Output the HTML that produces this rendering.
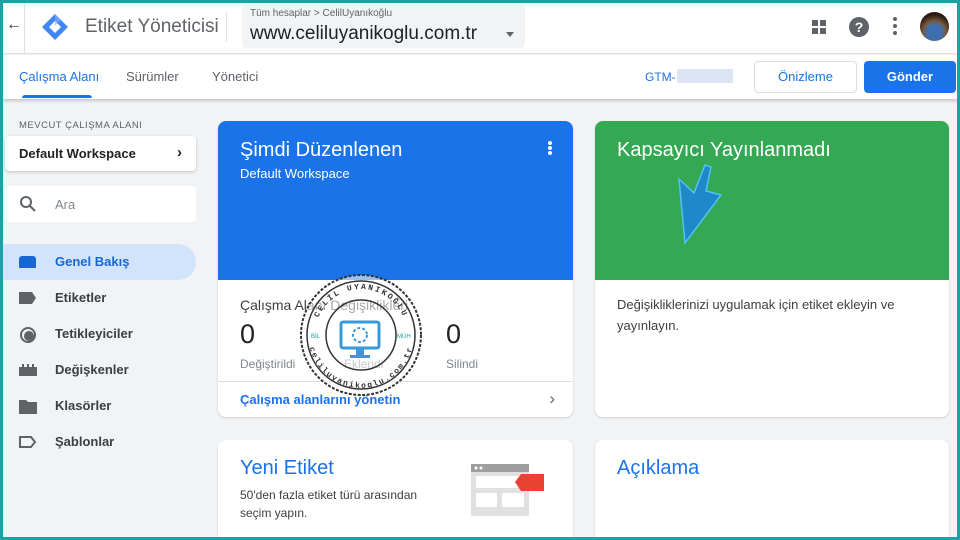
<!DOCTYPE html>
<html><head><meta charset="utf-8"><style>
*{margin:0;padding:0;box-sizing:border-box}
body{width:960px;height:540px;overflow:hidden;font-family:"Liberation Sans",sans-serif;background:#f1f3f4;position:relative}
.abs{position:absolute}
.frame{position:absolute;inset:0;border:3px solid #1ba3a3;pointer-events:none;z-index:50}
.hdr{left:0;top:0;width:960px;height:54px;background:#fff;border-bottom:1px solid #e0e0e0}
.tabs{left:0;top:55px;width:960px;height:44px;background:#fff;box-shadow:0 2px 3px rgba(0,0,0,.18)}
.card{position:absolute;background:#fff;border-radius:8px;box-shadow:0 1px 2px rgba(0,0,0,.15);overflow:hidden}
.nav{position:absolute;left:0;width:196px;height:36px;font-size:13px;font-weight:bold;color:#3c4043;line-height:36px;padding-left:55px}
.ic{position:absolute;left:19px;top:12px}
</style></head><body>
<div class="abs hdr">
 <div class="abs" style="left:6px;top:16px;font-size:16px;color:#333">←</div>
 <div class="abs" style="left:24px;top:0;width:1px;height:54px;background:#e0e0e0"></div>
 <svg class="abs" style="left:40px;top:13px" width="30" height="28" viewBox="0 0 30 28"><path d="M15 1 L28 14 L15 27 L2 14Z" fill="#4285f4"/><path d="M15 8 L21 14 L15 20 L9 14Z" fill="#fff"/><path d="M15 1 L21 7 L15 13" fill="#8ab4f8" opacity=".6"/></svg>
 <div class="abs" style="left:85px;top:16px;font-size:19px;color:#5f6368">Etiket Yöneticisi</div>
 <div class="abs" style="left:226px;top:12px;width:1px;height:30px;background:#e0e0e0"></div>
 <div class="abs" style="left:242px;top:5px;width:283px;height:43px;background:#f1f3f4;border-radius:4px"></div>
 <div class="abs" style="left:250px;top:8px;font-size:10px;color:#5f6368">Tüm hesaplar &gt; CelilUyanıkoğlu</div>
 <div class="abs" style="left:250px;top:23px;font-size:19px;color:#202124">www.celiluyanikoglu.com.tr</div>
 <div class="abs" style="left:506px;top:32px;border:4px solid transparent;border-top:5px solid #5f6368"></div>
 <div class="abs" style="left:812px;top:20px;width:6px;height:6px;background:#5f6368"></div>
 <div class="abs" style="left:820px;top:20px;width:6px;height:6px;background:#5f6368"></div>
 <div class="abs" style="left:812px;top:28px;width:6px;height:6px;background:#5f6368"></div>
 <div class="abs" style="left:820px;top:28px;width:6px;height:6px;background:#5f6368"></div>
 <div class="abs" style="left:849px;top:17px;width:20px;height:20px;border-radius:50%;background:#5f6368;color:#fff;font-weight:bold;font-size:14px;text-align:center;line-height:20px">?</div>
 <div class="abs" style="left:893px;top:17px;width:4px;height:4px;border-radius:50%;background:#5f6368;box-shadow:0 7px 0 #5f6368,0 14px 0 #5f6368"></div>
 <div class="abs" style="left:920px;top:12px;width:29px;height:29px;border-radius:50%;background:radial-gradient(circle at 50% 70%,#3d6fb0 30%,#7a5a40 45%,#2a1c14 70%)"></div>
</div>
<div class="abs tabs">
 <div class="abs" style="left:19px;top:14px;font-size:13px;color:#1a73e8">Çalışma Alanı</div>
 <div class="abs" style="left:22px;top:40px;width:70px;height:3px;background:#1a73e8;border-radius:3px 3px 0 0"></div>
 <div class="abs" style="left:126px;top:14px;font-size:13px;color:#5f6368">Sürümler</div>
 <div class="abs" style="left:212px;top:14px;font-size:13px;color:#5f6368">Yönetici</div>
 <div class="abs" style="left:645px;top:15px;font-size:12px;color:#1a73e8">GTM-</div>
 <div class="abs" style="left:677px;top:14px;width:56px;height:14px;background:#dde4f5"></div>
 <div class="abs" style="left:754px;top:6px;width:103px;height:32px;border:1px solid #dadce0;border-radius:4px;font-size:13px;color:#1a73e8;text-align:center;line-height:30px">Önizleme</div>
 <div class="abs" style="left:864px;top:6px;width:92px;height:32px;background:#1a73e8;border-radius:4px;font-size:13px;font-weight:bold;color:#fff;text-align:center;line-height:32px">Gönder</div>
</div>
<div class="abs" style="left:19px;top:120px;font-size:9.5px;letter-spacing:.5px;color:#5f6368">MEVCUT ÇALIŞMA ALANI</div>
<div class="abs" style="left:5px;top:136px;width:191px;height:35px;background:#fff;border-radius:4px;box-shadow:0 1px 3px rgba(0,0,0,.2);font-size:13px;font-weight:bold;color:#202124;padding:10px 14px">Default Workspace<span style="position:absolute;right:14px;top:8px;font-size:15px">›</span></div>
<div class="abs" style="left:5px;top:186px;width:191px;height:36px;background:#fff;border-radius:4px;font-size:13px;color:#80868b;padding:11px 0 0 50px">Ara
 <svg class="abs" style="left:14px;top:9px" width="18" height="18" viewBox="0 0 18 18"><circle cx="7" cy="7" r="5" fill="none" stroke="#5f6368" stroke-width="2"/><path d="M11 11 L16 16" stroke="#5f6368" stroke-width="2"/></svg></div>
<div class="nav" style="top:244px;background:#d2e3fc;border-radius:0 18px 18px 0;color:#1967d2">Genel Bakış<div class="ic" style="width:17px;height:12px;background:#1967d2;border-radius:3px 3px 1px 1px"></div></div>
<div class="nav" style="top:280px">Etiketler<svg class="ic" width="18" height="12"><path d="M0 0H13L17 6L13 12H0Z" fill="#5f6368"/></svg></div>
<div class="nav" style="top:316px">Tetikleyiciler<svg class="ic" style="top:10px" width="18" height="18"><circle cx="9" cy="9" r="7" fill="none" stroke="#5f6368" stroke-width="2"/><circle cx="10" cy="10" r="5" fill="#5f6368"/></svg></div>
<div class="nav" style="top:352px">Değişkenler<svg class="ic" width="18" height="12"><path d="M0 3H3V0H5V3H8V0H10V3H13V0H15V3H18V12H0Z" fill="#5f6368"/></svg></div>
<div class="nav" style="top:388px">Klasörler<svg class="ic" width="18" height="14"><path d="M0 0H7L9 2H18V14H0Z" fill="#5f6368"/></svg></div>
<div class="nav" style="top:424px">Şablonlar<svg class="ic" width="18" height="12"><path d="M1 1H12L16 6L12 11H1Z" fill="none" stroke="#5f6368" stroke-width="2"/></svg></div>

<div class="card" style="left:218px;top:121px;width:355px;height:296px">
 <div style="height:159px;background:#1a73e8;color:#fff;padding:18px 22px">
  <div style="font-size:20px">Şimdi Düzenlenen</div>
  <div style="font-size:13px;margin-top:4px">Default Workspace</div>
  <div class="abs" style="right:21px;top:20px;width:4px;height:4px;border-radius:50%;background:#fff;box-shadow:0 5px 0 #fff,0 10px 0 #fff"></div>
 </div>
 <div class="abs" style="left:22px;top:176px;font-size:14px;color:#3c4043">Çalışma Alanı Değişiklikleri</div>
 <div class="abs" style="left:22px;top:198px;font-size:27px;color:#202124">0</div>
 <div class="abs" style="left:126px;top:198px;font-size:27px;color:#202124">0</div>
 <div class="abs" style="left:228px;top:198px;font-size:27px;color:#202124">0</div>
 <div class="abs" style="left:22px;top:236px;font-size:12px;color:#80868b">Değiştirildi</div>
 <div class="abs" style="left:126px;top:236px;font-size:12px;color:#80868b">Eklendi</div>
 <div class="abs" style="left:228px;top:236px;font-size:12px;color:#80868b">Silindi</div>
 <div class="abs" style="left:0;top:260px;width:355px;height:1px;background:#e0e0e0"></div>
 <div class="abs" style="left:22px;top:271px;font-size:13px;font-weight:bold;color:#1a73e8">Çalışma alanlarını yönetin</div>
 <div class="abs" style="right:18px;top:268px;font-size:17px;color:#5f6368">›</div>
</div>
<svg class="abs" style="left:298px;top:272px;z-index:5" width="126" height="126" viewBox="0 0 126 126">
 <defs><path id="tp" d="M63 63 m-46 0 a46 46 0 1 1 92 0"/><path id="bp" d="M63 63 m-48 0 a48 48 0 1 0 96 0"/></defs>
 <circle cx="63" cy="63" r="60" fill="rgba(255,255,255,.55)" stroke="#333" stroke-width="2" stroke-dasharray="3 1.5"/>
 <circle cx="63" cy="63" r="54" fill="none" stroke="#333" stroke-width="1.5"/>
 <circle cx="63" cy="63" r="35" fill="none" stroke="#333" stroke-width="1.5"/>
 <text font-size="8" font-family="Liberation Mono" font-weight="bold" fill="#333" letter-spacing="2"><textPath href="#tp" startOffset="50%" text-anchor="middle">CELİL UYANIKOĞLU</textPath></text>
 <text font-size="8" font-family="Liberation Mono" font-weight="bold" fill="#333" letter-spacing="1"><textPath href="#bp" startOffset="50%" text-anchor="middle" dominant-baseline="hanging">celiluyanikoglu.com.tr</textPath></text>
 <text x="13" y="66" font-size="6" fill="#1aa0a0">BİL</text><text x="99" y="66" font-size="6" fill="#1aa0a0">MÜH</text>
 <rect x="43" y="50" width="38" height="26" rx="2" fill="#fff" stroke="#3a9ad9" stroke-width="3"/>
 <rect x="58" y="77" width="8" height="6" fill="#3a9ad9"/><rect x="52" y="83" width="20" height="3" fill="#3a9ad9"/>
 <circle cx="62" cy="63" r="7" fill="none" stroke="#3a9ad9" stroke-width="2" stroke-dasharray="3 2"/>
</svg>

<div class="card" style="left:595px;top:121px;width:354px;height:296px">
 <div style="height:159px;background:#34a853;color:#fff;padding:18px 22px;position:relative">
  <div style="font-size:20px">Kapsayıcı Yayınlanmadı</div>
  <svg class="abs" style="left:78px;top:42px" width="60" height="82"><path d="M32 2 L38 4 L33 28 L48 32 L12 80 L6 16 L21 30Z" fill="#1e88c8" stroke="#4fc3f7" stroke-width="1.5"/></svg>
 </div>
 <div style="padding:14px 22px;font-size:13px;line-height:21px;color:#3c4043">Değişikliklerinizi uygulamak için etiket ekleyin ve yayınlayın.</div>
</div>

<div class="card" style="left:218px;top:440px;width:355px;height:97px;border-radius:8px 8px 0 0">
 <div class="abs" style="left:22px;top:17px;font-size:20px;color:#1a73e8">Yeni Etiket</div>
 <div class="abs" style="left:22px;top:46px;width:200px;font-size:12px;line-height:18px;color:#3c4043">50'den fazla etiket türü arasından seçim yapın.</div>
 <svg class="abs" style="left:253px;top:24px" width="74" height="56"><rect x="0" y="0" width="58" height="52" fill="#e0e0e0"/><rect x="0" y="0" width="58" height="8" fill="#9e9e9e"/><circle cx="5" cy="4" r="1.5" fill="#fff"/><circle cx="10" cy="4" r="1.5" fill="#fff"/><rect x="5" y="12" width="48" height="12" fill="#fff"/><rect x="5" y="29" width="21" height="14" fill="#fff"/><rect x="31" y="29" width="22" height="14" fill="#fff"/><path d="M44 18 L50 10 H73 V27 H50Z" fill="#e94235"/></svg>
</div>
<div class="card" style="left:595px;top:440px;width:354px;height:97px;border-radius:8px 8px 0 0">
 <div class="abs" style="left:22px;top:17px;font-size:20px;color:#1a73e8">Açıklama</div>
</div>
<div class="frame"></div>
</body></html>
